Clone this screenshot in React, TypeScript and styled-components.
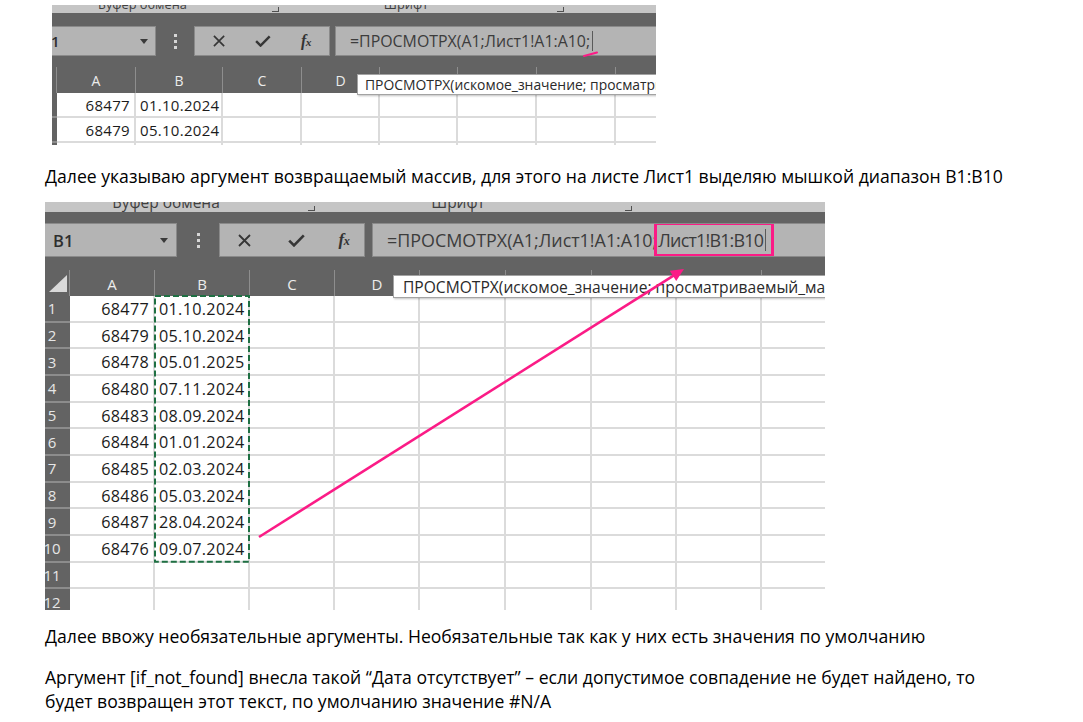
import React from "react";
import styled, { createGlobalStyle } from "styled-components";

const UI_FONT = `"Open Sans", "Noto Sans", "DejaVu Sans", sans-serif`;
const DOC_FONT = `"Open Sans", "Noto Sans", "DejaVu Sans", sans-serif`;
const PINK = "#fb1b86";

const GlobalStyle = createGlobalStyle`
  html, body { margin: 0; padding: 0; background: #ffffff; }
  body { font-family: ${DOC_FONT}; color: #000; }
  * { box-sizing: border-box; }
`;

type Group = { label: string; width: number; ml?: number; pr?: number };

type Metrics = {
  width: number;
  height: number;
  offsetX: number;
  offsetY: number;
  ribbonH: number;
  ribbonFont: number;
  ribbonLift: number;
  groups: Group[];
  padTop: number;
  barH: number;
  headerGap: number;
  headerH: number;
  nameW: number;
  nameShift: number;
  nameTextX: number;
  nameFont: number;
  nameText: string;
  arrowRight: number;
  dotsW: number;
  btnW: number;
  btnCols: string;
  iconScale: number;
  fieldGap: number;
  formulaFont: number;
  formulaPad: number;
  rowHeadW: number;
  rowHeadPad: number;
  rowNumFont: number;
  showRowNums: boolean;
  corner: boolean;
  cols: number[];
  rowH: number;
  rowCount: number;
  cellFont: number;
  headFont: number;
  marquee: boolean;
  tip: { left: number; top: number; height: number; font: number; pad: number; text: string };
};

const data = [
  ["68477", "01.10.2024"],
  ["68479", "05.10.2024"],
  ["68478", "05.01.2025"],
  ["68480", "07.11.2024"],
  ["68483", "08.09.2024"],
  ["68484", "01.01.2024"],
  ["68485", "02.03.2024"],
  ["68486", "05.03.2024"],
  ["68487", "28.04.2024"],
  ["68476", "09.07.2024"],
  ["", ""],
  ["", ""],
];

const LETTERS = "ABCDEFGHI".split("");

const Page = styled.div`
  width: 1083px;
  height: 722px;
  overflow: hidden;
  padding: 5px 0 0 45px;
  display: flex;
  flex-direction: column;
  align-items: flex-start;
`;

const ShotFrame = styled.div<{ $w: number; $h: number; $x: number; $y: number }>`
  position: relative;
  flex: 0 0 auto;
  width: ${(p) => p.$w}px;
  height: ${(p) => p.$h}px;
  margin: ${(p) => p.$y}px 0 0 ${(p) => p.$x}px;
  overflow: hidden;
  background: #ffffff;
  font-family: ${UI_FONT};
`;

const Ribbon = styled.div<{ $h: number }>`
  height: ${(p) => p.$h}px;
  background: #c5c5c5;
  display: flex;
  align-items: flex-end;
  overflow: hidden;
`;

const RibbonGroup = styled.div<{ $w: number; $ml: number }>`
  flex: 0 0 ${(p) => p.$w}px;
  margin-left: ${(p) => p.$ml}px;
  height: 100%;
  display: flex;
  align-items: flex-end;
`;

const RibbonLabel = styled.span<{ $fs: number; $pr: number; $lift: number }>`
  flex: 1;
  text-align: center;
  padding-right: ${(p) => p.$pr}px;
  font-size: ${(p) => p.$fs}px;
  line-height: 1;
  color: #404040;
  white-space: nowrap;
  margin-bottom: ${(p) => p.$lift}px;
`;

const Launcher = styled.span`
  flex: 0 0 7px;
  height: 5px;
  margin: 0 3px 1px 0;
  border-right: 1px solid #505050;
  border-bottom: 1px solid #505050;
`;

const BarArea = styled.div<{ $pt: number }>`
  background: #636363;
  padding-top: ${(p) => p.$pt}px;
`;

const FormulaBar = styled.div<{ $h: number }>`
  display: flex;
  align-items: stretch;
  height: ${(p) => p.$h}px;
`;

const NameBox = styled.div<{ $w: number; $shift: number; $tx: number; $fs: number; $ar: number }>`
  flex: 0 0 ${(p) => p.$w}px;
  margin-left: ${(p) => -p.$shift}px;
  padding: 0 ${(p) => p.$ar}px 0 ${(p) => p.$shift + p.$tx}px;
  background: #b4b4b4;
  border: 1px solid #8a8a8a;
  display: flex;
  align-items: center;
  justify-content: space-between;
  font-size: ${(p) => p.$fs}px;
  color: #2e2e2e;
  font-weight: 600;
`;

const DropArrow = styled.span`
  width: 0;
  height: 0;
  border-left: 4.5px solid transparent;
  border-right: 4.5px solid transparent;
  border-top: 5px solid #3a3a3a;
`;

const Grip = styled.div<{ $w: number }>`
  flex: 0 0 ${(p) => p.$w}px;
  display: flex;
  flex-direction: column;
  align-items: center;
  justify-content: center;
  gap: 3px;
  & > i {
    display: block;
    width: 3px;
    height: 3px;
    background: #d6d6d6;
  }
`;

const FxButtons = styled.div<{ $w: number; $cols: string }>`
  flex: 0 0 ${(p) => p.$w}px;
  background: #b4b4b4;
  border: 1px solid #8a8a8a;
  display: grid;
  grid-template-columns: ${(p) => p.$cols};
  align-items: center;
  justify-items: center;
`;

const FxGlyph = styled.span<{ $fs: number }>`
  font-family: "Liberation Serif", "DejaVu Serif", serif;
  font-style: italic;
  font-weight: bold;
  font-size: ${(p) => p.$fs}px;
  color: #333;
  letter-spacing: -0.5px;
  & > small {
    font-size: 0.72em;
  }
`;

const FormulaField = styled.div<{ $ml: number; $fs: number; $pl: number }>`
  flex: 1;
  margin-left: ${(p) => p.$ml}px;
  margin-right: -4px;
  background: #b4b4b4;
  border: 1px solid #8a8a8a;
  padding-left: ${(p) => p.$pl}px;
  display: flex;
  align-items: stretch;
  overflow: hidden;
  white-space: nowrap;
  font-size: ${(p) => p.$fs}px;
  color: #3c3c3c;
`;

const FormulaText = styled.span`
  display: flex;
  align-items: center;
`;

const Highlight = styled.span`
  display: flex;
  align-items: center;
  margin: -2px 0 -1px -3px;
  padding: 0 5px 0 1px;
  border: 3px solid ${PINK};
  letter-spacing: -0.8px;
`;

const Caret = styled.span<{ $h: number }>`
  display: inline-block;
  width: 1px;
  height: ${(p) => p.$h}px;
  margin-left: 2px;
  background: #5a5a5a;
  align-self: center;
`;

const HeaderRow = styled.div<{ $h: number; $mt: number }>`
  display: flex;
  height: ${(p) => p.$h}px;
  margin-top: ${(p) => p.$mt}px;
`;

const Corner = styled.div<{ $w: number }>`
  flex: 0 0 ${(p) => p.$w}px;
  display: flex;
  align-items: flex-end;
  justify-content: flex-end;
  padding: 0 2px 4px 0;
  border-right: 1px solid #8e8e8e;
  overflow: hidden;
`;

const CornerTriangle = styled.span`
  width: 0;
  height: 0;
  border-left: 18px solid transparent;
  border-bottom: 17px solid #d9d9d9;
`;

const ColHead = styled.div<{ $w: number; $fs: number }>`
  flex: 0 0 ${(p) => p.$w}px;
  min-width: 0;
  border-right: 1px solid #8e8e8e;
  display: flex;
  align-items: center;
  justify-content: center;
  font-size: ${(p) => p.$fs}px;
  color: #ececec;
  padding-top: 1px;
`;

const Grid = styled.div`
  position: relative;
`;

const Row = styled.div<{ $h: number }>`
  display: flex;
  height: ${(p) => p.$h}px;
`;

const RowHead = styled.div<{ $w: number; $pr: number; $fs: number }>`
  flex: 0 0 ${(p) => p.$w}px;
  min-width: 0;
  overflow: hidden;
  background: #636363;
  border-bottom: 2px solid #8c8c8c;
  display: flex;
  align-items: center;
  justify-content: center;
  padding-right: ${(p) => p.$pr}px;
  font-size: ${(p) => p.$fs}px;
  color: #e6e6e6;
  white-space: nowrap;
`;

const Cell = styled.div<{ $w: number; $fs: number; $right: boolean }>`
  flex: 0 0 ${(p) => p.$w}px;
  min-width: 0;
  border-right: 2px solid #dbdbdb;
  border-bottom: 2px solid #dbdbdb;
  display: flex;
  align-items: center;
  justify-content: ${(p) => (p.$right ? "flex-end" : "flex-start")};
  padding: 1px 4px 0 4px;
  font-size: ${(p) => p.$fs}px;
  letter-spacing: 0.3px;
  color: #1b1b1b;
  white-space: nowrap;
  overflow: hidden;
`;

const MarqueeBox = styled.svg`
  position: absolute;
  overflow: visible;
  pointer-events: none;
`;

const Tooltip = styled.div<{ $l: number; $t: number; $h: number; $fs: number; $pl: number }>`
  position: absolute;
  left: ${(p) => p.$l}px;
  top: ${(p) => p.$t}px;
  height: ${(p) => p.$h}px;
  width: 600px;
  padding-left: ${(p) => p.$pl}px;
  background: #ffffff;
  border: 1px solid #a3a3a3;
  box-shadow: 1px 1px 2px rgba(0, 0, 0, 0.25);
  display: flex;
  align-items: center;
  font-size: ${(p) => p.$fs}px;
  color: #2a2a2a;
  white-space: nowrap;
`;

const Annotation = styled.svg`
  position: absolute;
  left: 0;
  top: 0;
  width: 100%;
  height: 100%;
  pointer-events: none;
  overflow: visible;
`;

const Para = styled.p<{ $mt: number }>`
  margin: ${(p) => p.$mt}px 0 0 0;
  font-family: ${DOC_FONT};
  font-size: 17.6px;
  line-height: 24px;
  color: #000;
  white-space: nowrap;
`;

function XIcon({ s }: { s: number }) {
  return (
    <svg width={13 * s} height={13 * s} viewBox="0 0 13 13">
      <path d="M1 1 L12 12 M12 1 L1 12" stroke="#363636" strokeWidth="1.8" fill="none" />
    </svg>
  );
}

function CheckIcon({ s }: { s: number }) {
  return (
    <svg width={17 * s} height={13 * s} viewBox="0 0 17 13">
      <path d="M1.2 6.6 L6 11.4 L15.8 1.4" stroke="#363636" strokeWidth="2.6" fill="none" />
    </svg>
  );
}

function Shot({ m, formula, overlay }: { m: Metrics; formula: React.ReactNode; overlay?: React.ReactNode }) {
  const bLeft = m.rowHeadW + m.cols[0];
  return (
    <ShotFrame $w={m.width} $h={m.height} $x={m.offsetX} $y={m.offsetY}>
      <Ribbon $h={m.ribbonH}>
        {m.groups.map((g, i) => (
          <RibbonGroup key={i} $w={g.width} $ml={g.ml ?? 0}>
            <RibbonLabel $fs={m.ribbonFont} $pr={g.pr ?? 0} $lift={m.ribbonLift}>
              {g.label}
            </RibbonLabel>
            <Launcher />
          </RibbonGroup>
        ))}
      </Ribbon>
      <BarArea $pt={m.padTop}>
        <FormulaBar $h={m.barH}>
          <NameBox $w={m.nameW} $shift={m.nameShift} $tx={m.nameTextX} $fs={m.nameFont} $ar={m.arrowRight}>
            <span>{m.nameText}</span>
            <DropArrow />
          </NameBox>
          <Grip $w={m.dotsW}>
            <i />
            <i />
            <i />
          </Grip>
          <FxButtons $w={m.btnW} $cols={m.btnCols}>
            <XIcon s={m.iconScale} />
            <CheckIcon s={m.iconScale} />
            <FxGlyph $fs={17 * m.iconScale}>
              f<small>x</small>
            </FxGlyph>
          </FxButtons>
          <FormulaField $ml={m.fieldGap} $fs={m.formulaFont} $pl={m.formulaPad}>
            {formula}
          </FormulaField>
        </FormulaBar>
        <HeaderRow $h={m.headerH} $mt={m.headerGap}>
          <Corner $w={m.rowHeadW}>{m.corner && <CornerTriangle />}</Corner>
          {m.cols.map((w, i) => (
            <ColHead key={i} $w={w} $fs={m.headFont}>
              {LETTERS[i]}
            </ColHead>
          ))}
        </HeaderRow>
      </BarArea>
      <Grid>
        {data.slice(0, m.rowCount).map((r, i) => (
          <Row key={i} $h={m.rowH}>
            <RowHead $w={m.rowHeadW} $pr={m.rowHeadPad} $fs={m.rowNumFont}>
              {m.showRowNums ? i + 1 : ""}
            </RowHead>
            {m.cols.map((w, j) => (
              <Cell key={j} $w={w} $fs={m.cellFont} $right={j === 0}>
                {j < 2 ? r[j] : ""}
              </Cell>
            ))}
          </Row>
        ))}
        {m.marquee && (
          <MarqueeBox
            style={{ left: bLeft - 1, top: -1, width: m.cols[1] + 1, height: m.rowH * 10 + 1 }}
            viewBox={`0 0 ${m.cols[1] + 1} ${m.rowH * 10 + 1}`}
          >
            <rect
              x="1"
              y="1"
              width={m.cols[1] - 1}
              height={m.rowH * 10 - 1}
              fill="none"
              stroke="#1f7043"
              strokeWidth="2"
              strokeDasharray="6 3"
            />
          </MarqueeBox>
        )}
      </Grid>
      <Tooltip $l={m.tip.left} $t={m.tip.top} $h={m.tip.height} $fs={m.tip.font} $pl={m.tip.pad}>
        {m.tip.text}
      </Tooltip>
      {overlay}
    </ShotFrame>
  );
}

const shot1: Metrics = {
  width: 604,
  height: 140,
  offsetX: 7,
  offsetY: 0,
  ribbonH: 8,
  ribbonFont: 12.8,
  ribbonLift: 2,
  groups: [
    { label: "Буфер обмена", width: 250, ml: -20, pr: 19 },
    { label: "Шрифт", width: 285, pr: 27 },
    { label: "", width: 200 },
  ],
  padTop: 13,
  barH: 30,
  headerGap: 11,
  headerH: 26,
  nameW: 116,
  nameShift: 12,
  nameTextX: -12,
  nameFont: 15,
  nameText: "A1",
  arrowRight: 7,
  dotsW: 38,
  btnW: 134,
  btnCols: "48px 40px 46px",
  iconScale: 0.93,
  fieldGap: 5,
  formulaFont: 15.9,
  formulaPad: 14,
  rowHeadW: 5,
  rowHeadPad: 0,
  rowNumFont: 14,
  showRowNums: false,
  corner: false,
  cols: [79, 87, 79, 78, 78, 79, 79, 79],
  rowH: 25,
  rowCount: 3,
  cellFont: 15,
  headFont: 14,
  marquee: false,
  tip: {
    left: 305,
    top: 69,
    height: 21,
    font: 13.9,
    pad: 7,
    text: "ПРОСМОТРХ(искомое_значение; просматриваемый_массив; возвращаемый_массив)",
  },
};

const shot2: Metrics = {
  width: 780,
  height: 408,
  offsetX: 0,
  offsetY: 14,
  ribbonH: 10,
  ribbonFont: 15.5,
  ribbonLift: 2,
  groups: [
    { label: "Буфер обмена", width: 293, ml: -20, pr: 1 },
    { label: "Шрифт", width: 317, pr: 27 },
    { label: "", width: 205 },
  ],
  padTop: 11,
  barH: 34,
  headerGap: 13,
  headerH: 26,
  nameW: 138,
  nameShift: 6,
  nameTextX: 7,
  nameFont: 16.5,
  nameText: "B1",
  arrowRight: 8,
  dotsW: 42,
  btnW: 144,
  btnCols: "48px 56px 40px",
  iconScale: 1,
  fieldGap: 7,
  formulaFont: 17.9,
  formulaPad: 14,
  rowHeadW: 25,
  rowHeadPad: 11,
  rowNumFont: 15,
  showRowNums: true,
  corner: true,
  cols: [85, 95, 85, 85, 86, 86, 85, 85, 85],
  rowH: 26.68,
  rowCount: 12,
  cellFont: 16.2,
  headFont: 15,
  marquee: true,
  tip: {
    left: 348,
    top: 73,
    height: 23,
    font: 15.6,
    pad: 9,
    text: "ПРОСМОТРХ(искомое_значение; просматриваемый_массив; возвращаемый_массив)",
  },
};

function PinkArrow({ x1, y1, x2, y2 }: { x1: number; y1: number; x2: number; y2: number }) {
  const dx = x2 - x1;
  const dy = y2 - y1;
  const len = Math.hypot(dx, dy);
  const ux = dx / len;
  const uy = dy / len;
  const hl = 13;
  const hw = 6;
  const bx = x2 - ux * hl;
  const by = y2 - uy * hl;
  const pts = `${x2},${y2} ${bx - uy * hw},${by + ux * hw} ${bx + uy * hw},${by - ux * hw}`;
  return (
    <g>
      <line x1={x1} y1={y1} x2={bx + ux * 2} y2={by + uy * 2} stroke={PINK} strokeWidth="2.6" />
      <polygon points={pts} fill={PINK} />
    </g>
  );
}

export default function App() {
  return (
    <>
      <GlobalStyle />
      <Page>
        <Shot
          m={shot1}
          formula={
            <>
              <FormulaText>=ПРОСМОТРХ(A1;Лист1!A1:A10;</FormulaText>
              <Caret $h={20} />
            </>
          }
          overlay={
            <Annotation>
              <path d="M532 51 L545 47.5" stroke={PINK} strokeWidth="2" strokeLinecap="round" />
            </Annotation>
          }
        />
        <Para $mt={19}>
          Далее указываю аргумент возвращаемый массив, для этого на листе Лист1 выделяю мышкой диапазон B1:B10
        </Para>
        <Shot
          m={shot2}
          formula={
            <>
              <FormulaText>=ПРОСМОТРХ(A1;Лист1!A1:A10;</FormulaText>
              <Highlight>
                Лист1!B1:B10
                <Caret $h={22} />
              </Highlight>
            </>
          }
          overlay={
            <Annotation>
              <PinkArrow x1={214} y1={335} x2={639} y2={67} />
            </Annotation>
          }
        />
        <Para $mt={14}>
          Далее ввожу необязательные аргументы. Необязательные так как у них есть значения по умолчанию
        </Para>
        <Para $mt={17}>
          Аргумент [if_not_found] внесла такой “Дата отсутствует” – если допустимое совпадение не будет найдено, то
          <br />
          будет возвращен этот текст, по умолчанию значение #N/A
        </Para>
      </Page>
    </>
  );
}
